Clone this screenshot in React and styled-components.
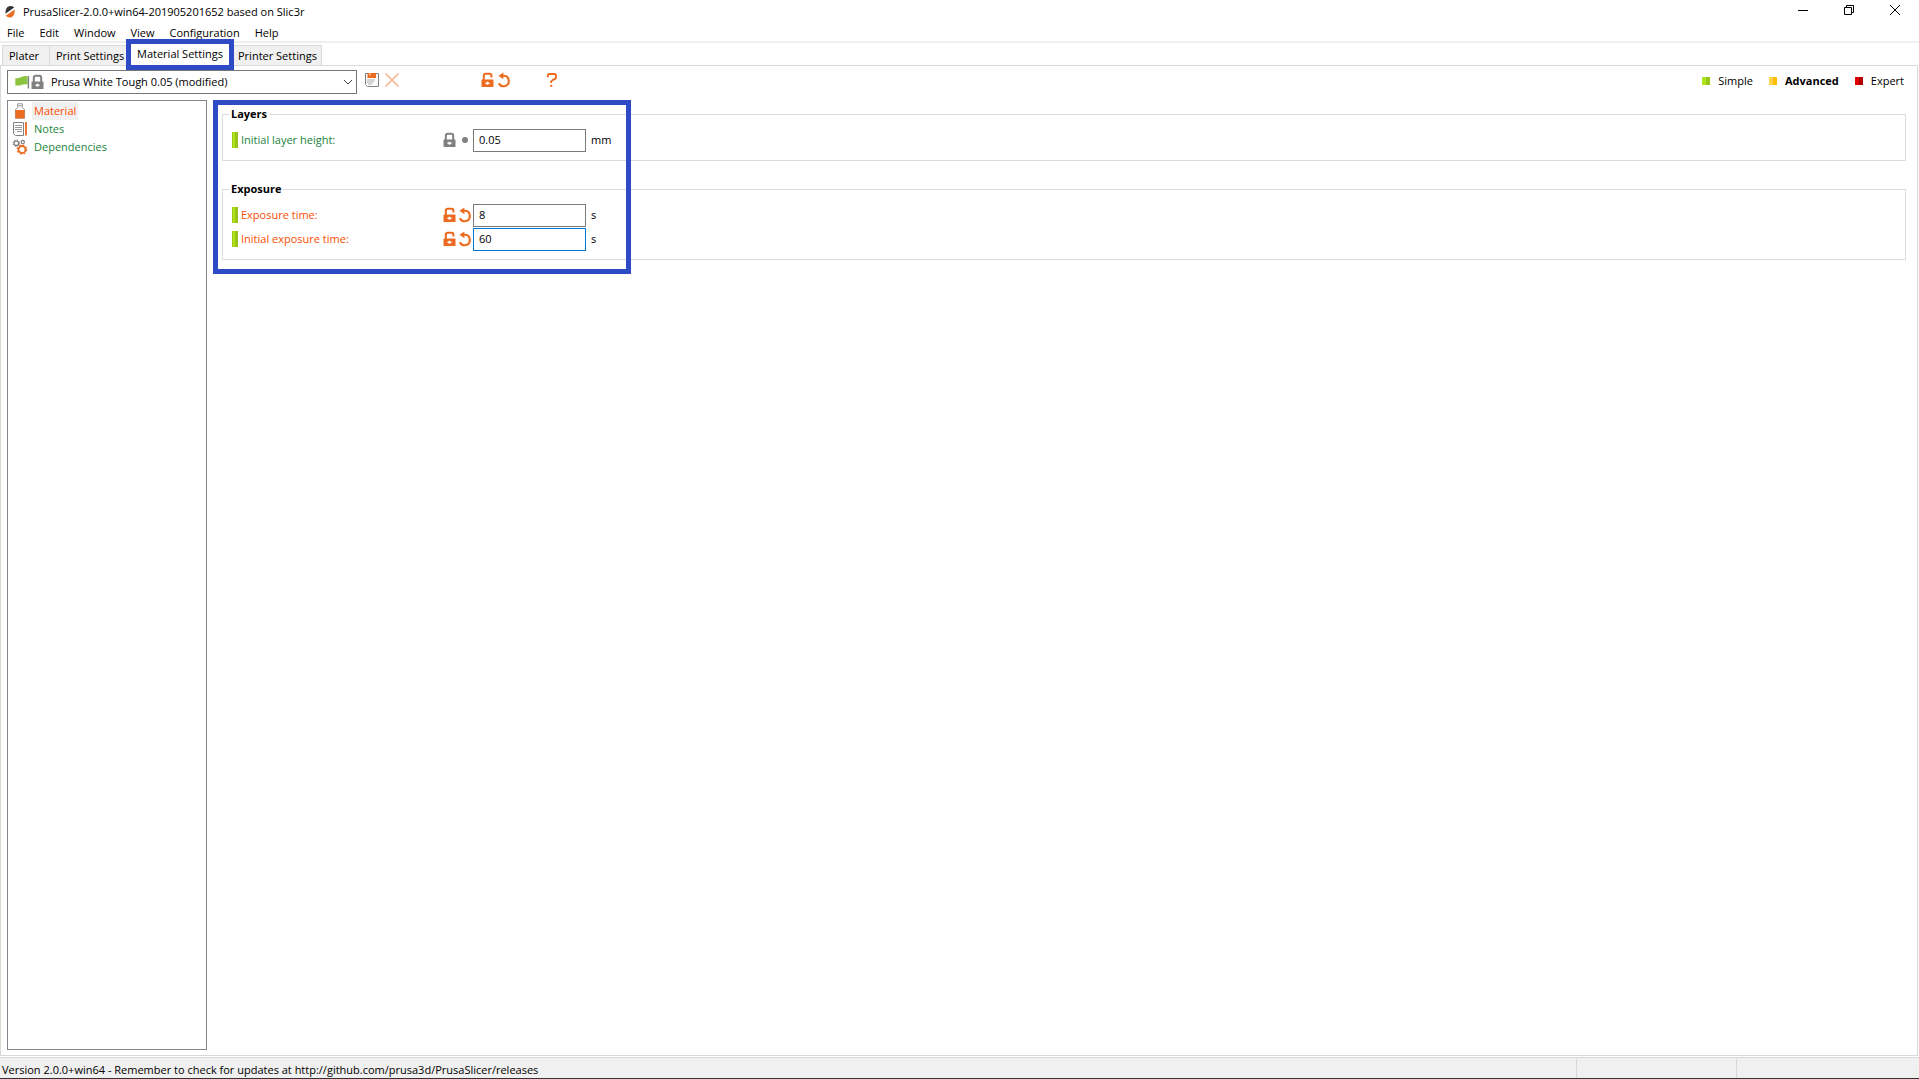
import React, { useState } from "react";
import styled, { createGlobalStyle, css } from "styled-components";

const ORANGE = "#ed6b21";
const GRAY = "#808080";
const SYSTEM = "#1a8439";
const MODIFIED = "#fc4d01";
const MARK = "#2f4ac5";

const GlobalStyle = createGlobalStyle`
  * {
    box-sizing: border-box;
  }
  body {
    margin: 0;
    background: #fff;
    color: #000;
    font-family: "Open Sans", "Noto Sans", sans-serif;
    font-size: 11px;
    line-height: 16px;
  }
  button, input, select {
    font: inherit;
    color: inherit;
  }
  svg {
    display: block;
    flex: none;
  }
`;

const Window = styled.div`
  display: flex;
  flex-direction: column;
  min-height: 100vh;
`;

const PlainButton = styled.button`
  display: flex;
  align-items: center;
  padding: 0;
  border: none;
  background: none;
`;

const TitleBar = styled.header`
  display: flex;
  align-items: center;
  height: 24px;
  padding: 0 16px 1px 4px;
`;

const Title = styled.h1`
  flex: 1;
  margin: 0 0 0 7px;
  font-size: 11px;
  font-weight: 400;
`;

const WindowButtons = styled.div`
  display: flex;
  align-items: center;
  align-self: flex-start;
  gap: 30px;
  height: 20px;
`;

const WindowButton = styled(PlainButton)`
  width: 16px;
  justify-content: center;
`;

const MenuBar = styled.nav`
  display: flex;
  gap: 15px;
  height: 19px;
  padding: 1px 7px 0;
  border-bottom: 2px solid #f0f0f0;
`;

const TabStrip = styled.div`
  display: flex;
  align-items: flex-end;
  height: 22px;
  padding-left: 2px;
`;

const Tab = styled.button`
  position: relative;
  height: 20px;
  padding: 0 0 0 6px;
  width: ${({ $width }) => $width}px;
  border: 1px solid #d9d9d9;
  border-left-width: ${({ $first }) => ($first ? 1 : 0)}px;
  border-bottom: none;
  background: #f0f0f0;
  text-align: left;
  white-space: nowrap;

  ${({ $active }) =>
    $active &&
    css`
      height: 22px;
      padding: 0 0 2px 9px;
      background: #fff;
      z-index: 1;
    `}
`;

const TabMark = styled.span`
  position: absolute;
  inset: -5px -3px -5px -2px;
  border: 5px solid ${MARK};
  pointer-events: none;
`;

const Page = styled.main`
  flex: 1;
  display: flex;
  flex-direction: column;
  margin-right: 1px;
  padding: 4px 11px 5px 6px;
  border: 1px solid #d9d9d9;
`;

const Toolbar = styled.div`
  display: flex;
  align-items: flex-start;
  margin-bottom: 6px;
`;

const PresetBox = styled.label`
  display: flex;
  align-items: center;
  width: 350px;
  height: 24px;
  padding: 0 3px 0 7px;
  border: 1px solid #767676;
`;

const PresetSelect = styled.select`
  flex: 1;
  margin-left: 2px;
  padding: 0 0 0 4px;
  border: none;
  background: none;
  appearance: none;
  outline: none;
`;

const Actions = styled.div`
  display: flex;
  padding: 2px 0 0 7px;
`;

const ActionButton = styled(PlainButton)`
  margin-left: ${({ $space }) => $space || 0}px;
`;

const Modes = styled.div`
  display: flex;
  gap: 16px;
  margin-left: auto;
  padding-top: 3px;
  padding-right: 2px;
`;

const ModeButton = styled(PlainButton)`
  gap: 8px;
  font-weight: ${({ $active }) => ($active ? 700 : 400)};
`;

const Swatch = styled.span`
  width: 8px;
  height: 8px;
  background: linear-gradient(90deg, ${({ $light }) => $light} 50%, ${({ $dark }) => $dark} 50%);
`;

const Body = styled.div`
  flex: 1;
  display: flex;
  align-items: stretch;
  gap: 6px;
`;

const Tree = styled.nav`
  flex: none;
  width: 200px;
  padding: 1px 4px;
  border: 1px solid #828790;
`;

const TreeItem = styled(PlainButton)`
  gap: 4px;
  height: 18px;
  color: ${({ $color }) => $color};
`;

const TreeLabel = styled.span`
  height: 18px;
  padding: 0 2px;
  line-height: 18px;
  background: ${({ $selected }) => ($selected ? "#f0f0f0" : "none")};
`;

const Settings = styled.section`
  flex: 1;
  min-width: 0;
`;

const Groups = styled.div`
  position: relative;
  display: flex;
  flex-direction: column;
  gap: 20px;
  padding: 6px 0 14px 9px;
`;

const GroupsMark = styled.div`
  position: absolute;
  top: 0;
  bottom: 0;
  left: 0;
  width: 418px;
  border: 5px solid ${MARK};
  pointer-events: none;
`;

const Group = styled.fieldset`
  margin: 0;
  padding: 6px 9px 8px;
  border: 1px solid #dcdcdc;
`;

const Legend = styled.legend`
  margin-left: -3px;
  padding: 0 2px;
  font-weight: 700;
`;

const Row = styled.div`
  display: grid;
  grid-template-columns: 9px 202px 30px 118px auto;
  align-items: center;
  height: 24px;
`;

const LevelBar = styled.span`
  width: 6px;
  height: 16px;
  background: linear-gradient(90deg, #9cc916 0 1px, #b2e21a 1px 3px, #96c418 3px);
`;

const FieldLabel = styled.label`
  color: ${({ $color }) => $color};
`;

const FieldIcons = styled.span`
  display: flex;
  align-items: center;
`;

const Field = styled.input`
  width: 113px;
  height: 23px;
  padding: 0 5px 1px;
  border: 1px solid ${({ $focused }) => ($focused ? "#0078d7" : "#7a7a7a")};
  border-radius: 0;
  background: #fff;
  outline: none;
`;

const StatusBar = styled.footer`
  display: grid;
  grid-template-columns: 1fr 160px 183px;
  height: 22px;
  margin-top: 1px;
  border-top: 1px solid #d7d7d7;
  border-bottom: 1px solid #333;
  background: #f0f0f0;
`;

const StatusCell = styled.div`
  margin-top: 1px;
  padding: 3px 2px 0;
  line-height: 16px;

  & + & {
    border-left: 1px solid #d7d7d7;
  }
`;

const LockIcon = ({ open, color = GRAY }) => (
  <svg width="14" height="16" viewBox="0 0 14 16" aria-hidden="true">
    <path
      d={open ? "M2.8 8V3.6Q2.8 1.8 4.6 1.8H8.6Q10.4 1.8 10.4 3.6V5.4" : "M2.8 8V3.8Q2.8 1.8 4.8 1.8H8.2Q10.2 1.8 10.2 3.8V8"}
      fill="none"
      stroke={color}
      strokeWidth="2"
    />
    <rect x="0.5" y="7.5" width="12" height="7.5" rx="0.6" fill={color} />
    <path d="M4.5 11.2H8.5M6.5 9.7V12.7" stroke="#fff" strokeWidth="1.6" />
  </svg>
);

const UndoIcon = () => (
  <svg width="16" height="16" viewBox="0 0 16 16" aria-hidden="true">
    <path d="M6 3.8H8A5.2 5.2 0 1 1 2.9 11.2" fill="none" stroke={ORANGE} strokeWidth="2.1" />
    <path d="M2.4 3.8L7.4 0.4V7.2Z" fill={ORANGE} />
  </svg>
);

const BulletIcon = () => (
  <svg width="16" height="16" viewBox="0 0 16 16" aria-hidden="true">
    <circle cx="8" cy="8" r="3" fill={GRAY} />
  </svg>
);

const LogoIcon = () => (
  <svg width="12" height="14" viewBox="0 0 12 14" aria-hidden="true">
    <path d="M1.4 8Q1.6 2.4 5 1.2Q8 0.4 10.2 2.4L1.8 8.4Z" fill="#333" />
    <path d="M10.8 4.6Q11 10.4 7.6 12.2Q4.4 13.4 1.6 10.8Z" fill={ORANGE} />
  </svg>
);

const FlagIcon = () => (
  <svg width="16" height="16" viewBox="0 0 16 16" aria-hidden="true">
    <path d="M0.3 4.2Q3.5 4.4 6.5 3Q9.5 1.7 12.5 2.2V10.4Q9.5 9.7 6.5 10.9Q3.5 12 0.3 11.4Z" fill="#8bc53f" />
    <path d="M13.4 2V14.5" stroke={GRAY} strokeWidth="1.4" />
  </svg>
);

const SaveIcon = () => (
  <svg width="16" height="16" viewBox="0 0 16 16" aria-hidden="true">
    <path d="M1.5 1.5H14.5V14.5H3.5L1.5 12.5Z" fill="#fff" stroke={GRAY} />
    <path d="M3.5 1H12V6H3.5Z" fill={ORANGE} />
    <path d="M6 1.4V3.4" stroke="#fff" />
    <path d="M3 8H11M3 10H10M4 12H8" stroke="#a8a8a8" />
  </svg>
);

const DeleteIcon = () => (
  <svg width="16" height="16" viewBox="0 0 16 16" aria-hidden="true">
    <path d="M1.5 1.5L14.5 14.5M14.5 1.5L1.5 14.5" stroke="#f8c4a6" strokeWidth="1.8" />
  </svg>
);

const HelpIcon = () => (
  <svg width="12" height="16" viewBox="0 0 12 16" aria-hidden="true">
    <path d="M1.8 5.2V3.6Q1.8 2 3.4 2H8.4Q10 2 10 3.6V5.6Q10 6.6 9.2 7L6.6 8Q5.2 8.6 5.2 10V11" fill="none" stroke={ORANGE} strokeWidth="1.9" />
    <rect x="4.2" y="12.8" width="2" height="2" fill={ORANGE} />
  </svg>
);

const ChevronIcon = () => (
  <svg width="10" height="6" viewBox="0 0 10 6" aria-hidden="true">
    <path d="M1 1L5 5L9 1" fill="none" stroke="#444" />
  </svg>
);

const ResinIcon = () => (
  <svg width="16" height="16" viewBox="0 0 16 16" aria-hidden="true">
    <path d="M5.5 0.8H10.5V2.8H5.5ZM5.8 2.8V4.6L3.5 6.4V15.2H12.5V6.4L10.2 4.6V2.8" fill="#fff" stroke="#999" />
    <rect x="3.4" y="7" width="9.2" height="8.4" fill={ORANGE} />
  </svg>
);

const NotesIcon = () => (
  <svg width="16" height="16" viewBox="0 0 16 16" aria-hidden="true">
    <path d="M1.5 1.5H11.5V14.5H3.5L1.5 12.5Z" fill="#fff" stroke={GRAY} />
    <path d="M3 4.5H10M3 6.5H10M3 8.5H10M5 10.5H10" stroke="#999" />
    <path d="M14 1V14.5" stroke={ORANGE} strokeWidth="1.8" />
  </svg>
);

const GearsIcon = () => (
  <svg width="16" height="16" viewBox="0 0 16 16" aria-hidden="true">
    <circle cx="4.3" cy="4.2" r="2.3" fill="none" stroke={GRAY} strokeWidth="1.3" />
    <circle cx="4.3" cy="4.2" r="3.3" fill="none" stroke={GRAY} strokeDasharray="1.2 1.4" />
    <circle cx="10.8" cy="2.9" r="1.6" fill="none" stroke={GRAY} strokeWidth="1.2" />
    <circle cx="10" cy="10.5" r="3.5" fill="none" stroke={ORANGE} strokeWidth="1.8" />
    <circle cx="10" cy="10.5" r="4.7" fill="none" stroke={ORANGE} strokeWidth="1.2" strokeDasharray="1.8 1.9" />
  </svg>
);

const menus = ["File", "Edit", "Window", "View", "Configuration", "Help"];

const tabs = [
  { name: "Plater", width: 48 },
  { name: "Print Settings", width: 78 },
  { name: "Material Settings", width: 104 },
  { name: "Printer Settings", width: 90 },
];

const modes = [
  { name: "Simple", light: "#b2e21a", dark: "#96c418" },
  { name: "Advanced", light: "#ffd347", dark: "#ffbe00" },
  { name: "Expert", light: "#e00000", dark: "#aa0000" },
];

const treeItems = [
  { name: "Material", color: MODIFIED, Icon: ResinIcon },
  { name: "Notes", color: SYSTEM, Icon: NotesIcon },
  { name: "Dependencies", color: SYSTEM, Icon: GearsIcon },
];

const groups = [
  {
    title: "Layers",
    fields: [{ id: "initial_layer_height", label: "Initial layer height:", unit: "mm" }],
  },
  {
    title: "Exposure",
    fields: [
      { id: "exposure_time", label: "Exposure time:", unit: "s", modified: true },
      { id: "initial_exposure_time", label: "Initial exposure time:", unit: "s", modified: true },
    ],
  },
];

const App = () => {
  const [activeTab, setActiveTab] = useState("Material Settings");
  const [mode, setMode] = useState("Advanced");
  const [selected, setSelected] = useState("Material");
  const [focused, setFocused] = useState("initial_exposure_time");
  const [values, setValues] = useState({
    initial_layer_height: "0.05",
    exposure_time: "8",
    initial_exposure_time: "60",
  });

  const handleChange = (e) => {
    setValues({ ...values, [e.target.name]: e.target.value });
  };

  return (
    <Window>
      <GlobalStyle />
      <TitleBar>
        <LogoIcon />
        <Title>PrusaSlicer-2.0.0+win64-201905201652 based on Slic3r</Title>
        <WindowButtons>
          <WindowButton aria-label="Minimize">
            <svg width="10" height="10" viewBox="0 0 10 10"><path d="M0 5.5H10" stroke="#000" /></svg>
          </WindowButton>
          <WindowButton aria-label="Restore">
            <svg width="10" height="10" viewBox="0 0 10 10">
              <path d="M0.5 2.5H7.5V9.5H0.5ZM2.5 2.5V0.5H9.5V7.5H7.5" fill="none" stroke="#000" />
            </svg>
          </WindowButton>
          <WindowButton aria-label="Close">
            <svg width="10" height="10" viewBox="0 0 10 10"><path d="M0 0L10 10M10 0L0 10" stroke="#000" /></svg>
          </WindowButton>
        </WindowButtons>
      </TitleBar>

      <MenuBar>
        {menus.map((name) => (
          <PlainButton key={name}>{name}</PlainButton>
        ))}
      </MenuBar>

      <TabStrip role="tablist">
        {tabs.map(({ name, width }, i) => (
          <Tab
            key={name}
            role="tab"
            aria-selected={activeTab === name}
            $width={width}
            $first={i === 0}
            $active={activeTab === name}
            onClick={() => setActiveTab(name)}
          >
            {name}
            {activeTab === name && <TabMark />}
          </Tab>
        ))}
      </TabStrip>

      <Page>
        <Toolbar>
          <PresetBox>
            <FlagIcon />
            <LockIcon />
            <PresetSelect aria-label="Preset">
              <option>Prusa White Tough 0.05 (modified)</option>
            </PresetSelect>
            <ChevronIcon />
          </PresetBox>
          <Actions>
            <ActionButton aria-label="Save preset"><SaveIcon /></ActionButton>
            <ActionButton aria-label="Delete preset" $space={4}><DeleteIcon /></ActionButton>
            <ActionButton aria-label="Unlock" $space={81}><LockIcon open color={ORANGE} /></ActionButton>
            <ActionButton aria-label="Reset" $space={1}><UndoIcon /></ActionButton>
            <ActionButton aria-label="Help" $space={34}><HelpIcon /></ActionButton>
          </Actions>
          <Modes>
            {modes.map(({ name, light, dark }) => (
              <ModeButton key={name} $active={mode === name} aria-pressed={mode === name} onClick={() => setMode(name)}>
                <Swatch $light={light} $dark={dark} />
                {name}
              </ModeButton>
            ))}
          </Modes>
        </Toolbar>

        <Body>
          <Tree>
            {treeItems.map(({ name, color, Icon }) => (
              <TreeItem key={name} $color={color} onClick={() => setSelected(name)}>
                <Icon />
                <TreeLabel $selected={selected === name}>{name}</TreeLabel>
              </TreeItem>
            ))}
          </Tree>

          <Settings>
            <Groups>
              {groups.map(({ title, fields }) => (
                <Group key={title}>
                  <Legend>{title}</Legend>
                  {fields.map(({ id, label, unit, modified }) => (
                    <Row key={id}>
                      <LevelBar />
                      <FieldLabel htmlFor={id} $color={modified ? MODIFIED : SYSTEM}>{label}</FieldLabel>
                      <FieldIcons>
                        <LockIcon open={modified} color={modified ? ORANGE : GRAY} />
                        {modified ? <UndoIcon /> : <BulletIcon />}
                      </FieldIcons>
                      <Field
                        id={id}
                        name={id}
                        type="text"
                        value={values[id]}
                        $focused={focused === id}
                        onFocus={() => setFocused(id)}
                        onChange={handleChange}
                      />
                      <span>{unit}</span>
                    </Row>
                  ))}
                </Group>
              ))}
              <GroupsMark />
            </Groups>
          </Settings>
        </Body>
      </Page>

      <StatusBar>
        <StatusCell>Version 2.0.0+win64 - Remember to check for updates at http://github.com/prusa3d/PrusaSlicer/releases</StatusCell>
        <StatusCell />
        <StatusCell />
      </StatusBar>
    </Window>
  );
};

export default App;
